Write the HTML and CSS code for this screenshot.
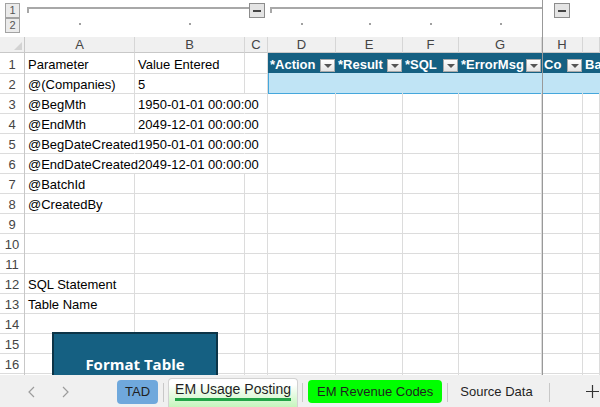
FILE: index.html
```html
<!DOCTYPE html>
<html lang="en">
<head>
    <meta charset="UTF-8">
    <meta name="viewport" content="width=device-width, initial-scale=1.0">
    <title>EM Usage Posting</title>
    <link rel="stylesheet" href="styles.css">
</head>
<body>
<div class="app">
    <div class="outline">
        <div class="lvl lvl-1">1</div>
        <div class="group group-ab">
            <span class="bracket"></span>
            <span class="minus"></span>
        </div>
        <div class="group group-dg">
            <span class="bracket"></span>
        </div>
        <div class="minus-cell"><span class="minus"></span></div>
        <div></div>

        <div class="lvl lvl-2">2</div>
        <div class="dot"></div>
        <div class="dot"></div>
        <div></div>
        <div class="dot"></div>
        <div class="dot"></div>
        <div class="dot"></div>
        <div class="dot"></div>
    </div>

    <div class="sheet">
        <div class="row hdr">
            <div class="corner"><span class="tri"></span></div>
            <div class="col">A</div>
            <div class="col">B</div>
            <div class="col">C</div>
            <div class="col">D</div>
            <div class="col">E</div>
            <div class="col">F</div>
            <div class="col">G</div>
            <div class="col">H</div>
            <div class="col"></div>
        </div>

        <div class="row">
            <div class="rh">1</div>
            <div class="c">Parameter</div>
            <div class="c">Value Entered</div>
            <div class="c"></div>
            <div class="th"><span>*Action</span><i class="flt"></i></div>
            <div class="th"><span>*Result</span><i class="flt"></i></div>
            <div class="th"><span>*SQL</span><i class="flt"></i></div>
            <div class="th"><span>*ErrorMsg</span><i class="flt"></i></div>
            <div class="th"><span>Co</span><i class="flt"></i></div>
            <div class="th"><span>Ba</span></div>
        </div>

        <div class="row">
            <div class="rh">2</div>
            <div class="c">@(Companies)</div>
            <div class="c">5</div>
            <div class="c"></div>
            <div class="tb first"></div>
            <div class="tb"></div>
            <div class="tb"></div>
            <div class="tb"></div>
            <div class="tb"></div>
            <div class="tb"></div>
        </div>

        <div class="row">
            <div class="rh">3</div>
            <div class="c">@BegMth</div>
            <div class="c spill">1950-01-01 00:00:00</div>
            <div class="c"></div><div class="c"></div><div class="c"></div><div class="c"></div><div class="c"></div><div class="c"></div><div class="c"></div>
        </div>
        <div class="row">
            <div class="rh">4</div>
            <div class="c">@EndMth</div>
            <div class="c spill">2049-12-01 00:00:00</div>
            <div class="c"></div><div class="c"></div><div class="c"></div><div class="c"></div><div class="c"></div><div class="c"></div><div class="c"></div>
        </div>
        <div class="row">
            <div class="rh">5</div>
            <div class="c spill">@BegDateCreated</div>
            <div class="c spill">1950-01-01 00:00:00</div>
            <div class="c"></div><div class="c"></div><div class="c"></div><div class="c"></div><div class="c"></div><div class="c"></div><div class="c"></div>
        </div>
        <div class="row">
            <div class="rh">6</div>
            <div class="c spill">@EndDateCreated</div>
            <div class="c spill">2049-12-01 00:00:00</div>
            <div class="c"></div><div class="c"></div><div class="c"></div><div class="c"></div><div class="c"></div><div class="c"></div><div class="c"></div>
        </div>
        <div class="row">
            <div class="rh">7</div>
            <div class="c">@BatchId</div>
            <div class="c"></div><div class="c"></div><div class="c"></div><div class="c"></div><div class="c"></div><div class="c"></div><div class="c"></div><div class="c"></div>
        </div>
        <div class="row">
            <div class="rh">8</div>
            <div class="c">@CreatedBy</div>
            <div class="c"></div><div class="c"></div><div class="c"></div><div class="c"></div><div class="c"></div><div class="c"></div><div class="c"></div><div class="c"></div>
        </div>
        <div class="row">
            <div class="rh">9</div>
            <div class="c"></div><div class="c"></div><div class="c"></div><div class="c"></div><div class="c"></div><div class="c"></div><div class="c"></div><div class="c"></div><div class="c"></div>
        </div>
        <div class="row">
            <div class="rh">10</div>
            <div class="c"></div><div class="c"></div><div class="c"></div><div class="c"></div><div class="c"></div><div class="c"></div><div class="c"></div><div class="c"></div><div class="c"></div>
        </div>
        <div class="row">
            <div class="rh">11</div>
            <div class="c"></div><div class="c"></div><div class="c"></div><div class="c"></div><div class="c"></div><div class="c"></div><div class="c"></div><div class="c"></div><div class="c"></div>
        </div>
        <div class="row">
            <div class="rh">12</div>
            <div class="c">SQL Statement</div>
            <div class="c"></div><div class="c"></div><div class="c"></div><div class="c"></div><div class="c"></div><div class="c"></div><div class="c"></div><div class="c"></div>
        </div>
        <div class="row">
            <div class="rh">13</div>
            <div class="c">Table Name</div>
            <div class="c"></div><div class="c"></div><div class="c"></div><div class="c"></div><div class="c"></div><div class="c"></div><div class="c"></div><div class="c"></div>
        </div>
        <div class="row">
            <div class="rh">14</div>
            <div class="c"></div><div class="c"></div><div class="c"></div><div class="c"></div><div class="c"></div><div class="c"></div><div class="c"></div><div class="c"></div><div class="c"></div>
        </div>
        <div class="row">
            <div class="rh">15</div>
            <div class="c"></div><div class="c"></div><div class="c"></div><div class="c"></div><div class="c"></div><div class="c"></div><div class="c"></div><div class="c"></div><div class="c"></div>
        </div>
        <div class="row">
            <div class="rh">16</div>
            <div class="c"></div><div class="c"></div><div class="c"></div><div class="c"></div><div class="c"></div><div class="c"></div><div class="c"></div><div class="c"></div><div class="c"></div>
        </div>
        <div class="row">
            <div class="rh"></div>
            <div class="c"></div><div class="c"></div><div class="c"></div><div class="c"></div><div class="c"></div><div class="c"></div><div class="c"></div><div class="c"></div><div class="c"></div>
        </div>

        <button class="format-btn">Format Table</button>
    </div>

    <div class="frozen"></div>

    <div class="tabs">
        <svg class="nav nav-prev" width="7" height="12" viewBox="0 0 7 12"><path d="M6 1 1 6l5 5" fill="none" stroke="#9c9c9c" stroke-width="1.2"/></svg>
        <svg class="nav nav-next" width="7" height="12" viewBox="0 0 7 12"><path d="M1 1l5 5-5 5" fill="none" stroke="#9c9c9c" stroke-width="1.2"/></svg>
        <div class="tab tad">TAD</div>
        <span class="sep sep-1"></span>
        <div class="tab active"><span>EM Usage Posting</span></div>
        <span class="sep sep-2"></span>
        <div class="tab green">EM Revenue Codes</div>
        <span class="sep sep-3"></span>
        <div class="tab plain">Source Data</div>
        <span class="sep sep-4"></span>
        <svg class="add" width="13" height="13" viewBox="0 0 13 13"><path d="M6.5 0v13M0 6.5h13" stroke="#333" stroke-width="1.2"/></svg>
    </div>
</div>
</body>
</html>
```

FILE: styles.css
```css
:root {
    --cols: 25px 110px 110px 23px 68px 67px 56px 83px 41px 1fr;
    --grid: #dcdcdc;
    --accent: #156082;
}
body {
    margin: 0;
    font-family: "Liberation Sans", Arial, sans-serif;
    font-size: 13px;
    color: #000;
    background: #fff;
}
.app {
    position: relative;
    width: 600px;
    height: 407px;
    overflow: hidden;
}

/* outline / grouping bar */
.outline {
    display: grid;
    grid-template-columns: var(--cols);
    grid-template-rows: 18px 19px;
    height: 37px;
}
.lvl {
    width: 15px;
    height: 15px;
    margin-left: 5px;
    box-sizing: border-box;
    border: 1px solid #a3a3a3;
    background: #ebebeb;
    color: #555;
    font-size: 11px;
    line-height: 13px;
    text-align: center;
}
.lvl-1 { margin-top: 3px; }
.group {
    display: flex;
    align-items: flex-start;
}
.group-ab { grid-column: 2 / 5; }
.group-dg { grid-column: 5 / 9; }
.bracket {
    flex: 1;
    height: 4px;
    margin: 7px 0 0 2px;
    border-top: 2px solid #a8a8a8;
    border-left: 2px solid #a8a8a8;
}
.minus {
    display: block;
    position: relative;
    flex-shrink: 0;
    width: 16px;
    height: 15px;
    box-sizing: border-box;
    border: 1px solid #8c8c8c;
    background: #e4e4e4;
}
.minus::after {
    content: "";
    position: absolute;
    left: 3px;
    top: 6px;
    width: 8px;
    height: 2px;
    background: #444;
}
.group-ab .minus { margin: 3px 3px 0 0; }
.minus-cell .minus { margin: 3px 0 0 12px; }
.dot::after {
    content: "";
    display: block;
    width: 2px;
    height: 2px;
    margin: 5px auto 0;
    background: #a0a0a0;
}

/* sheet grid */
.sheet {
    position: relative;
    height: 338px;
    overflow: hidden;
}
.row {
    display: grid;
    grid-template-columns: var(--cols);
    height: 20px;
}
.row.hdr {
    height: 16px;
    background: #f0f0f0;
}
.corner {
    display: flex;
    justify-content: flex-end;
    align-items: flex-end;
    border-right: 1px solid #c8c8c8;
    border-bottom: 1px solid #c8c8c8;
}
.tri {
    width: 0;
    height: 0;
    margin: 0 2px 2px 0;
    border-left: 8px solid transparent;
    border-bottom: 8px solid #d3d3d3;
}
.col {
    border-right: 1px solid #d6d6d6;
    border-bottom: 1px solid #c8c8c8;
    color: #444;
    text-align: center;
    line-height: 15px;
}
.rh {
    padding-top: 3px;
    border-right: 1px solid #c8c8c8;
    border-bottom: 1px solid var(--grid);
    color: #444;
    text-align: center;
    line-height: 17px;
}
.c {
    padding: 3px 0 0 3px;
    border-right: 1px solid var(--grid);
    border-bottom: 1px solid var(--grid);
    line-height: 17px;
    white-space: nowrap;
}
.c.spill { border-right-color: transparent; }

.th {
    display: flex;
    justify-content: space-between;
    align-items: flex-start;
    padding-left: 2px;
    background: var(--accent);
    color: #fff;
    font-weight: bold;
    white-space: nowrap;
    overflow: hidden;
}
.th span {
    padding-top: 4px;
    line-height: 16px;
}
.flt {
    position: relative;
    flex-shrink: 0;
    width: 15px;
    height: 13px;
    margin: 6px 1px 0 0;
    box-sizing: border-box;
    border: 1px solid #a9a9a9;
    background: linear-gradient(#ffffff, #e4e4e4);
}
.flt::after {
    content: "";
    position: absolute;
    left: 3px;
    top: 4px;
    border-left: 4px solid transparent;
    border-right: 4px solid transparent;
    border-top: 4px solid #555;
}
.tb {
    background: #c0e4f5;
    border-bottom: 1px solid #45a7dc;
}
.tb.first { border-left: 1px solid #45a7dc; }

.format-btn {
    position: absolute;
    left: 52px;
    top: 295px;
    width: 166px;
    height: 64px;
    padding: 0;
    background: var(--accent);
    border: 2px solid #0c3447;
    color: #fff;
    font-family: "Open Sans", sans-serif;
    font-weight: 700;
    font-size: 15px;
    cursor: pointer;
}

.frozen {
    position: absolute;
    left: 542px;
    top: 0;
    width: 1px;
    height: 375px;
    background: #999;
}

/* sheet tabs */
.tabs {
    display: flex;
    align-items: flex-start;
    height: 32px;
    background: #f0f0f0;
    color: #1f1f1f;
    font-size: 13px;
}
.nav { margin-top: 11px; flex-shrink: 0; }
.nav-prev { margin-left: 28px; }
.nav-next { margin-left: 27px; }
.tab { white-space: nowrap; flex-shrink: 0; }
.tad {
    margin: 5px 0 0 48px;
    height: 24px;
    padding: 0 8px;
    line-height: 24px;
    background: #6fa8dc;
    border-radius: 4px;
}
.sep {
    flex-shrink: 0;
    width: 1px;
    height: 19px;
    margin-top: 8px;
    background: #c8c8c8;
}
.sep-1 { margin-left: 5px; margin-right: 4px; }
.sep-2 { margin-left: 4px; margin-right: 5px; }
.sep-3 { margin-left: 5px; }
.sep-4 { margin-left: 4px; }
.active {
    margin-top: 3px;
    height: 29px;
    padding: 2px 6px 0;
    box-sizing: border-box;
    background: linear-gradient(#ffffff 20%, #c6f5bd);
    border: 1px solid #d2d2d2;
    border-bottom: none;
    border-radius: 4px 4px 0 0;
    font-size: 14px;
}
.active span {
    display: block;
    padding-bottom: 1px;
    line-height: 16px;
    border-bottom: 3px solid #22a447;
}
.green {
    margin-top: 5px;
    height: 23px;
    padding: 0 9px;
    line-height: 23px;
    background: #00ff00;
    border-radius: 4px;
}
.plain {
    margin-top: 5px;
    height: 23px;
    padding: 0 12px;
    line-height: 23px;
}
.add {
    flex-shrink: 0;
    margin: 10px 0 0 36px;
}
```
